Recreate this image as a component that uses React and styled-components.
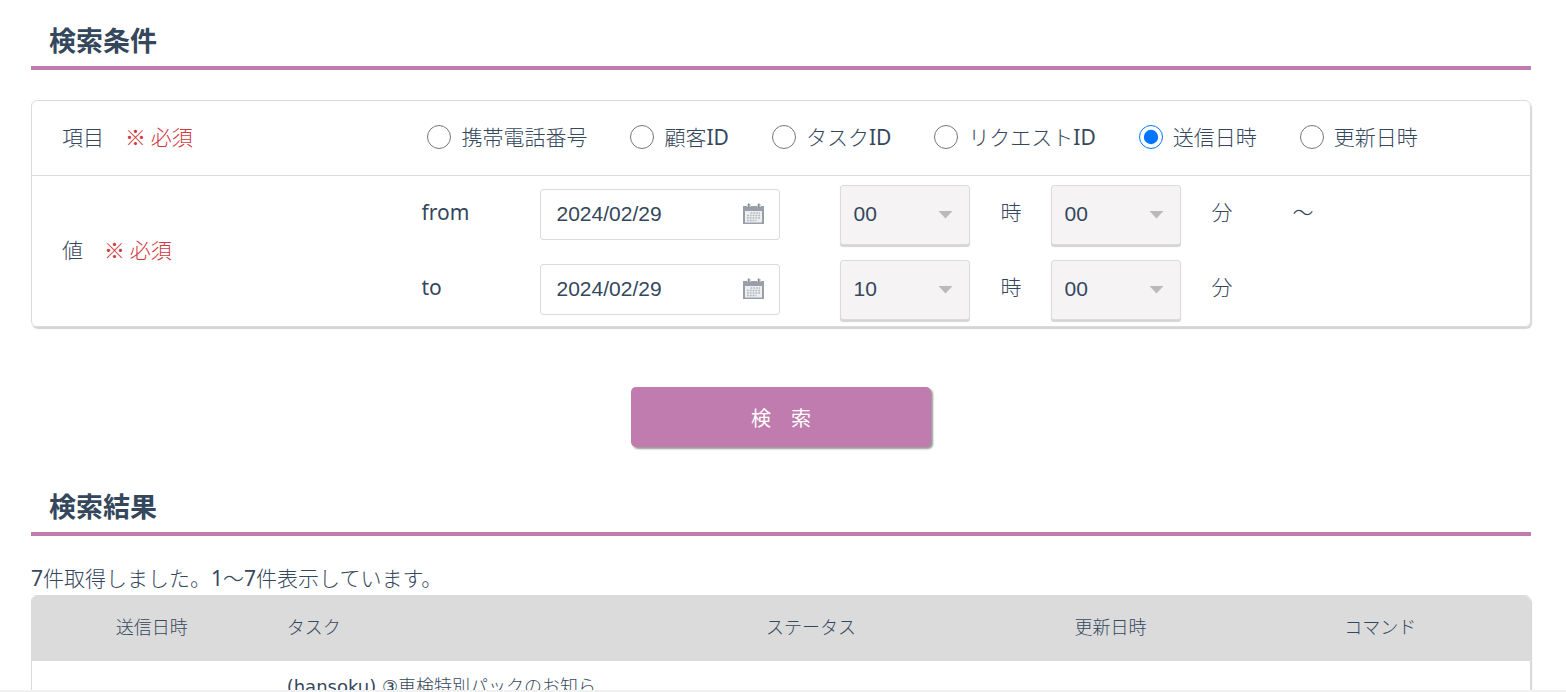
import { useState } from 'react';
import styled, { createGlobalStyle, css } from 'styled-components';

const color = {
  text: '#34475c',
  accent: '#c07cae',
  line: '#dbdbdb',
  required: '#d0393e',
  disabled: '#f5f3f4',
};

const items = [
  { id: 'phone', label: '携帯電話番号' },
  { id: 'customer', label: '顧客ID' },
  { id: 'task', label: 'タスクID' },
  { id: 'request', label: 'リクエストID' },
  { id: 'sent', label: '送信日時' },
  { id: 'updated', label: '更新日時' },
];

const columns = [
  { label: '送信日時', width: '16%' },
  { label: 'タスク', width: '24%', left: true },
  { label: 'ステータス', width: '24%' },
  { label: '更新日時', width: '16%' },
  { label: 'コマンド', width: '20%' },
];

const results = [['', '(hansoku) ③車検特別パックのお知ら', '', '', '']];

const pad = (n) => String(n).padStart(2, '0');
const hours = Array.from({ length: 24 }, (_, i) => pad(i));
const minutes = Array.from({ length: 60 }, (_, i) => pad(i));

const TimeSelect = ({ label, options, value }) => (
  <SelectBox>
    <select aria-label={label} defaultValue={value} disabled>
      {options.map((option) => (
        <option key={option}>{option}</option>
      ))}
    </select>
    <svg width="15" height="8" viewBox="0 0 15 8" aria-hidden="true">
      <path d="M0.500 0h14L7.500 7.500z" fill="#bababa" />
    </svg>
  </SelectBox>
);

const CalendarIcon = () => (
  <svg width="21" height="22" viewBox="0 0 21 22" aria-hidden="true">
    <path d="M0 3h21v18H0z" fill="#989fa8" />
    <path d="M2 8h17v11.500H2z" fill="#eceef0" />
    <path d="M4 1h4v3H4zM14 1h4v3h-4z" fill="#d3d7db" />
    <path d="M5 0.500h1.500v4H5zM15 0.500h1.500v4H15z" fill="#858d98" />
    <path
      d="M7.500 10h9.500M4 12.500h13M4 15h13M4 17.500h9.500"
      stroke="#b3b8bf"
      strokeWidth="1.500"
      strokeDasharray="1.800 1"
    />
  </svg>
);

const DateRow = ({ name, hour, minute, tail }) => {
  const [date, setDate] = useState('2024/02/29');
  return (
    <Range>
      <RangeName htmlFor={name}>{name}</RangeName>
      <DateBox>
        <input id={name} type="text" value={date} onChange={(e) => setDate(e.target.value)} />
        <button type="button" aria-label="カレンダー">
          <CalendarIcon />
        </button>
      </DateBox>
      <Time>
        <TimeSelect label={`${name} 時`} options={hours} value={hour} />
        <Unit>時</Unit>
        <TimeSelect label={`${name} 分`} options={minutes} value={minute} />
        <Unit>分</Unit>
      </Time>
      {tail && <Tail>{tail}</Tail>}
    </Range>
  );
};

const App = () => {
  const [item, setItem] = useState('sent');

  return (
    <Screen>
      <GlobalStyle />
      <Content>
        <Title>検索条件</Title>
        <form onSubmit={(e) => e.preventDefault()}>
          <Panel>
            <Row>
              <Name>
                項目<Required>※ 必須</Required>
              </Name>
              <Radios role="radiogroup" aria-label="項目">
                {items.map(({ id, label }) => (
                  <label key={id}>
                    <input
                      type="radio"
                      name="item"
                      value={id}
                      checked={item === id}
                      onChange={() => setItem(id)}
                    />
                    {label}
                  </label>
                ))}
              </Radios>
            </Row>
            <Row>
              <Name>
                値<Required>※ 必須</Required>
              </Name>
              <div>
                <DateRow name="from" hour="00" minute="00" tail="～" />
                <DateRow name="to" hour="10" minute="00" />
              </div>
            </Row>
          </Panel>
          <SearchButton type="submit">検　索</SearchButton>
        </form>
        <Title>検索結果</Title>
        <Message>7件取得しました。1～7件表示しています。</Message>
        <Table>
          <thead>
            <tr>
              {columns.map(({ label, width, left }) => (
                <HeadCell key={label} $width={width} $left={left}>
                  {label}
                </HeadCell>
              ))}
            </tr>
          </thead>
          <tbody>
            {results.map((cells, row) => (
              <tr key={row}>
                {cells.map((cell, i) => (
                  <Cell key={columns[i].label} $left={columns[i].left}>
                    {cell}
                  </Cell>
                ))}
              </tr>
            ))}
          </tbody>
        </Table>
      </Content>
      <ScrollTrack />
    </Screen>
  );
};

const GlobalStyle = createGlobalStyle`
  * {
    box-sizing: border-box;
  }
  body {
    margin: 0;
    background: #fff;
    color: ${color.text};
    font-family: 'Noto Sans', 'Noto Sans CJK JP Light', 'Noto Sans CJK JP', sans-serif;
    font-size: 21px;
    line-height: 30px;
  }
`;

const Screen = styled.div`
  display: flex;
  flex-direction: column;
  height: 100vh;
`;

const Content = styled.main`
  flex: 1;
  min-height: 0;
  overflow: hidden;
  padding: 20px 35px 0 31px;
`;

const ScrollTrack = styled.div`
  flex: none;
  height: 2px;
  background: #f1f1f1;
`;

const Title = styled.h2`
  margin: 0 0 30px;
  padding: 0 18px 6px;
  border-bottom: 4px solid ${color.accent};
  font-family: 'Noto Sans CJK JP', sans-serif;
  font-size: 27px;
  font-weight: 700;
  line-height: 40px;
`;

const Panel = styled.div`
  border: 1px solid ${color.line};
  border-radius: 6px;
  box-shadow: 1px 2px 1px #d4d4d4;
`;

const Row = styled.div`
  display: grid;
  grid-template-columns: 26% 1fr;
  align-items: center;
  min-height: 74px;
  & + & {
    border-top: 1px solid ${color.line};
  }
`;

const Name = styled.div`
  padding: 0 0 4px 30px;
`;

const Required = styled.span`
  margin-left: 21px;
  color: ${color.required};
  font-family: 'Noto Sans CJK JP Light', 'Noto Sans CJK JP', sans-serif;
`;

const Radios = styled.div`
  display: flex;
  flex-wrap: wrap;
  gap: 10px 43px;
  padding: 0 0 2px 6px;
  label {
    display: flex;
    align-items: center;
    gap: 10px;
    white-space: nowrap;
  }
  input {
    width: 24px;
    height: 24px;
    margin: 0;
  }
`;

const Range = styled.div`
  display: flex;
  align-items: center;
  height: 75px;
  padding-top: 2px;
`;

const RangeName = styled.label`
  flex: 0 0 119px;
  padding-bottom: 6px;
`;

const DateBox = styled.div`
  display: flex;
  align-items: center;
  width: 240px;
  height: 51px;
  margin-right: 60px;
  padding: 0 15px 2px;
  border: 1px solid ${color.line};
  border-radius: 3px;
  input {
    flex: 1;
    min-width: 0;
    padding: 0;
    border: 0;
    outline: 0;
    color: ${color.text};
    font: 21px 'Liberation Sans', Arial, sans-serif;
  }
  button {
    display: flex;
    padding: 0;
    border: 0;
    background: none;
    cursor: pointer;
  }
`;

const Time = styled.div`
  display: flex;
  align-items: center;
  gap: 30px;
`;

const Unit = styled.span`
  padding-bottom: 6px;
`;

const SelectBox = styled.div`
  position: relative;
  width: 130px;
  select {
    display: block;
    width: 100%;
    height: 60px;
    padding: 0 12px 2px;
    appearance: none;
    border: 1px solid ${color.line};
    border-radius: 3px;
    box-shadow: 0 2px 1px #d4d4d4;
    background: ${color.disabled};
    color: ${color.text};
    opacity: 1;
    font: 21px 'Liberation Sans', Arial, sans-serif;
  }
  svg {
    position: absolute;
    top: 26px;
    right: 17px;
    pointer-events: none;
  }
`;

const Tail = styled.span`
  margin-left: 60px;
  padding-bottom: 6px;
`;

const SearchButton = styled.button`
  display: block;
  width: 300px;
  height: 60px;
  margin: 60px auto 39px;
  border: 0;
  border-radius: 5px;
  box-shadow: 2px 2px 2px #999;
  background: ${color.accent};
  color: #fff;
  font-family: 'Noto Sans CJK JP', sans-serif;
  font-size: 20px;
  cursor: pointer;
`;

const Message = styled.p`
  margin: 0;
  padding-bottom: 5px;
  line-height: 24px;
`;

/* the result list keeps the wider Latin letters */
const Table = styled.table`
  width: 100%;
  table-layout: fixed;
  border: 1px solid ${color.line};
  border-radius: 6px;
  border-spacing: 0;
  box-shadow: 1px 2px 1px #d4d4d4;
  overflow: hidden;
  font-family: 'DejaVu Sans', 'Noto Sans CJK JP Light', 'Noto Sans CJK JP', sans-serif;
  font-size: 18px;
  line-height: 24px;
`;

const align = css`
  text-align: ${({ $left }) => ($left ? 'left' : 'center')};
`;

const HeadCell = styled.th`
  ${align}
  width: ${({ $width }) => $width};
  height: 65px;
  padding: 0 15px 2px;
  background: ${color.line};
  font-weight: inherit;
`;

const Cell = styled.td`
  ${align}
  padding: 14px 15px;
`;

export default App;
